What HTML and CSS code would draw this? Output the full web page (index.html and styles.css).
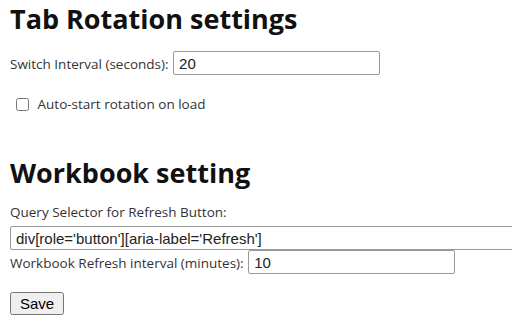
FILE: index.html
```html
<!DOCTYPE html>
<html lang="en">

<head>
    <meta charset="UTF-8">
    <meta name="viewport" content="width=device-width, initial-scale=1.0">
    <title>Options</title>
    <link rel="stylesheet" href="styles.css">
</head>

<body>
    <h1 class="title">Tab Rotation settings</h1>

    <div class="row">
        <label for="interval">Switch Interval (seconds):</label>
        <input type="text" id="interval" class="field" value="20" />
    </div>

    <div class="row check">
        <input type="checkbox" id="autostart" />
        <label for="autostart">Auto-start rotation on load</label>
    </div>

    <h1 class="title second">Workbook setting</h1>

    <div class="stack">
        <label for="selector">Query Selector for Refresh Button:</label>
        <input type="text" id="selector" class="field wide" value="div[role='button'][aria-label='Refresh']" />
        <div>
            <label for="refresh">Workbook Refresh interval (minutes):</label>
            <input type="text" id="refresh" class="field" value="10" />
        </div>
    </div>

    <button id="save" class="save">Save</button>
</body>

</html>
```

FILE: styles.css
```css
body {
    font-family: "Open Sans", sans-serif;
    font-size: 13.5px;
    color: #333;
    margin: 0 10px;
    width: 560px;
}

.title {
    font-size: 27px;
    font-weight: bold;
    color: #111;
    margin: 0 0 13px 0;
    line-height: 38px;
}

.second {
    margin-top: 40px;
    margin-bottom: 11px;
}

.row {
    margin-bottom: 20px;
}

.check {
    padding-left: 2px;
}

.check input {
    margin: 3px 5px 3px 4px;
    vertical-align: -2px;
}

.field {
    font-family: "Liberation Sans", Arial, sans-serif;
    font-size: 15px;
    width: 207px;
    height: 24px;
    box-sizing: border-box;
    padding: 1px 5px;
    margin-left: 1px;
    border: 1px solid #999;
    border-radius: 2px;
    color: #222;
}

.wide {
    width: 520px;
    display: block;
    margin-left: 0;
    margin-top: 5px;
}

.save {
    font-family: "Liberation Sans", Arial, sans-serif;
    font-size: 15px;
    margin-top: 18px;
    padding: 1px 8px;
}
```
